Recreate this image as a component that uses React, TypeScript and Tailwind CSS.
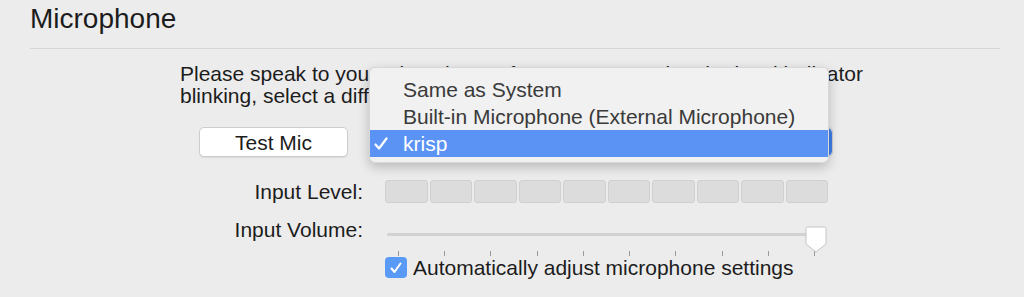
import React from 'react';

const font = { fontFamily: '"Liberation Sans", Arial, sans-serif' };

const LevelMeter = () => (
  <div className="grid grid-cols-10 gap-[2px] w-[443px] h-[23px]">
    {Array.from({ length: 10 }).map((_, i) => (
      <div key={i} className="rounded-[3px] bg-[#dcdcdc] border border-[#d0d0d0]" />
    ))}
  </div>
);

const VolumeSlider = () => (
  <div className="relative w-[443px] h-[26px]">
    <div className="absolute left-[2px] right-[2px] top-[16px] h-[3px] rounded-full bg-[#d2d2d2]" />
    <svg className="absolute left-[418px] top-[9px]" width="26" height="28" viewBox="0 0 26 28">
      <path d="M3 2.5 Q3 1 4.5 1 H21.5 Q23 1 23 2.5 V18 L13 26 L3 18 Z" fill="#ffffff" stroke="#c4c4c4" strokeWidth="1" />
    </svg>
  </div>
);

const Ticks = () => (
  <div className="w-[443px] px-[13px] flex justify-between h-[5px]">
    {Array.from({ length: 10 }).map((_, i) => (
      <div key={i} className="w-px h-[5px] bg-[#9a9a9a]" />
    ))}
  </div>
);

const DeviceMenu = () => (
  <div className="absolute left-[369px] top-[67px] w-[460px] h-[96px] rounded-[6px] bg-[#f1f1f1] border border-black/10 shadow-[0_4px_12px_rgba(0,0,0,0.22)] pt-[8px] text-[21px] text-[#3a3a3a]">
    <div className="h-[27px] leading-[27px] pl-[33px]">Same as System</div>
    <div className="h-[27px] leading-[27px] pl-[33px]">Built-in Microphone (External Microphone)</div>
    <div className="h-[27px] leading-[27px] bg-[#5b93f5] text-white flex items-center">
      <span className="w-[33px] pl-[4px] flex items-center">
        <svg width="14" height="14" viewBox="0 0 14 14">
          <path d="M1.5 7.5 L5 11.5 L12.5 1.5" fill="none" stroke="#ffffff" strokeWidth="2.2" strokeLinecap="round" strokeLinejoin="round" />
        </svg>
      </span>
      <span>krisp</span>
    </div>
  </div>
);

export default function App() {
  return (
    <div className="relative w-[1024px] h-[297px] bg-[#ececec] overflow-hidden text-[#1c1c1c]" style={font}>
      <h1 className="pl-[30px] pt-[3px] text-[28px] leading-[32px] font-normal">Microphone</h1>
      <div className="ml-[30px] mt-[13px] w-[970px] h-px bg-[#d6d6d6]" />

      <div className="ml-[180px] mt-[14px]">
        <p className="text-[21px] leading-[22px] w-[700px]">
          Please speak to your microphone. If you are not seeing the level indicator blinking, select a different microphone.
        </p>

        <div className="flex items-center mt-[20px] h-[30px]">
          <button className="ml-[19px] w-[149px] h-[30px] rounded-[5px] bg-white border border-[#cdcdcd] shadow-[0_1px_1px_rgba(0,0,0,0.08)] text-[21px] leading-none">
            Test Mic
          </button>
          <div className="ml-[22px] w-[463px] h-[30px] rounded-[5px] bg-white border border-[#cdcdcd] flex justify-end">
            <div className="w-[22px] h-full rounded-r-[5px] bg-[#3f7de8]" />
          </div>
        </div>

        <div className="flex items-center mt-[23px] h-[23px]">
          <div className="w-[183px] text-right text-[21px] leading-[23px]">Input Level:</div>
          <div className="ml-[22px]"><LevelMeter /></div>
        </div>

        <div className="flex items-center mt-[14px] h-[26px]">
          <div className="w-[183px] text-right text-[21px] leading-[26px]">Input Volume:</div>
          <div className="ml-[22px]"><VolumeSlider /></div>
        </div>

        <div className="ml-[205px] mt-[8px]"><Ticks /></div>

        <label className="ml-[205px] mt-[1px] flex items-center gap-[6px] h-[21px]">
          <span className="w-[22px] h-[21px] rounded-[4px] bg-[#5a9af7] flex items-center justify-center">
            <svg width="14" height="14" viewBox="0 0 14 14">
              <path d="M2.5 7.5 L5.5 11 L11.5 2.5" fill="none" stroke="#ffffff" strokeWidth="2" strokeLinecap="round" strokeLinejoin="round" />
            </svg>
          </span>
          <span className="text-[21px] leading-[21px]">Automatically adjust microphone settings</span>
        </label>
      </div>

      <DeviceMenu />
    </div>
  );
}
